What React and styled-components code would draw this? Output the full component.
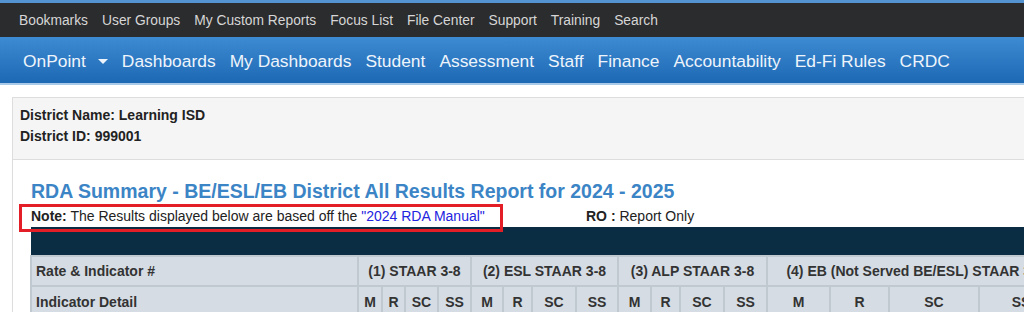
import React from "react";
import styled, { createGlobalStyle } from "styled-components";

const GlobalStyle = createGlobalStyle`
  html, body { margin: 0; padding: 0; background: #fff; overflow: hidden; }
  body { font-family: "Liberation Sans", Arial, sans-serif; color: #333; }
  * { box-sizing: border-box; }
`;

const Page = styled.div`
  width: 1280px;
`;

const UtilityBar = styled.div`
  display: flex;
  align-items: center;
  height: 37px;
  padding: 0 0 0 12px;
  background: #2b2c2e;
  border-top: 3px solid #5594d2;
`;

const UtilityLink = styled.a`
  padding: 0 7px;
  font-size: 13.8px;
  color: #d6d6d6;
  text-decoration: none;
  white-space: nowrap;
`;

const NavBar = styled.div`
  display: flex;
  align-items: center;
  height: 48px;
  padding: 3px 0 0 16px;
  background: linear-gradient(#3d8bd3, #1d68b3);
  border-bottom: 2px solid #a9c9e8;
`;

const NavItem = styled.a`
  display: flex;
  align-items: center;
  padding: 0 7px;
  font-size: 17.4px;
  color: #eef4fb;
  text-decoration: none;
  white-space: nowrap;
`;

const Caret = styled.span`
  display: inline-block;
  margin-left: 12px;
  width: 0;
  height: 0;
  border-left: 5px solid transparent;
  border-right: 5px solid transparent;
  border-top: 5px solid #eef4fb;
`;

const Panel = styled.div`
  margin: 12px 0 0 12px;
  border: 1px solid #dddddd;
  border-right: none;
  border-bottom: none;
`;

const PanelHeader = styled.div`
  background: #f5f5f5;
  border-bottom: 1px solid #dddddd;
  padding: 7px 7px 12px;
`;

const InfoLine = styled.div`
  font-size: 14px;
  font-weight: bold;
  line-height: 21px;
  color: #222;
`;

const PanelBody = styled.div`
  padding: 20px 0 0 17px;
`;

const Title = styled.h2`
  margin: 0 0 0 1px;
  font-size: 19.5px;
  line-height: 22px;
  font-weight: bold;
  color: #3b84c5;
`;

const NoteRow = styled.div`
  display: grid;
  grid-template-columns: 556px auto;
  margin-top: 5px;
  font-size: 14px;
  line-height: 18px;
  color: #222;
`;

const NoteCell = styled.div`
  position: relative;
  padding-left: 1px;
`;

const Highlight = styled.div`
  position: absolute;
  left: -11px;
  top: -3px;
  width: 484px;
  height: 28px;
  border: 3px solid #e31e26;
  z-index: 2;
  pointer-events: none;
`;

const ManualLink = styled.a`
  color: #2323e0;
  text-decoration: none;
`;

const Table = styled.table`
  margin-top: 2px;
  border-collapse: collapse;
  table-layout: fixed;
  width: ${(p) => p.$w}px;
`;

const DarkRow = styled.tr`
  height: 29px;
  background: #0b2d44;
`;

const Row = styled.tr`
  height: ${(p) => p.$h}px;
  background: #d5dce4;
`;

const Cell = styled.td`
  border: 2px solid #c0c8d0;
  padding: 0 ${(p) => (p.$left ? "4px" : "0")};
  text-align: ${(p) => (p.$left ? "left" : "center")};
  font-size: 14px;
  font-weight: bold;
  color: #333;
  white-space: nowrap;
  overflow: hidden;
`;

const DarkCell = styled.td`
  border: none;
  padding: 0;
`;

const colWidths = [327, 24, 23, 33, 33, 32, 29, 44, 42, 33, 29, 44, 43, 63, 59, 90, 84];
const tableWidth = colWidths.reduce((a, b) => a + b, 0);

const utility = ["Bookmarks", "User Groups", "My Custom Reports", "Focus List", "File Center", "Support", "Training", "Search"];
const nav = ["Dashboards", "My Dashboards", "Student", "Assessment", "Staff", "Finance", "Accountability", "Ed-Fi Rules", "CRDC"];

const groups = [
  { label: "(1) STAAR 3-8", span: 4 },
  { label: "(2) ESL STAAR 3-8", span: 4 },
  { label: "(3) ALP STAAR 3-8", span: 4 },
  { label: "(4) EB (Not Served BE/ESL) STAAR 3-8", span: 4 },
];

const subs = ["M", "R", "SC", "SS", "M", "R", "SC", "SS", "M", "R", "SC", "SS", "M", "R", "SC", "SS"];

export default function App() {
  return (
    <Page>
      <GlobalStyle />
      <UtilityBar>
        {utility.map((u) => (
          <UtilityLink key={u}>{u}</UtilityLink>
        ))}
      </UtilityBar>
      <NavBar>
        <NavItem>
          OnPoint
          <Caret />
        </NavItem>
        {nav.map((n) => (
          <NavItem key={n}>{n}</NavItem>
        ))}
      </NavBar>
      <Panel>
        <PanelHeader>
          <InfoLine>District Name: Learning ISD</InfoLine>
          <InfoLine>District ID: 999001</InfoLine>
        </PanelHeader>
        <PanelBody>
          <Title>RDA Summary - BE/ESL/EB District All Results Report for 2024 - 2025</Title>
          <NoteRow>
            <NoteCell>
              <Highlight />
              <b>Note:</b> The Results displayed below are based off the{" "}
              <ManualLink>"2024 RDA Manual"</ManualLink>
            </NoteCell>
            <div>
              <b>RO :</b> Report Only
            </div>
          </NoteRow>
          <Table $w={tableWidth}>
            <colgroup>
              {colWidths.map((w, i) => (
                <col key={i} style={{ width: w }} />
              ))}
            </colgroup>
            <tbody>
              <DarkRow>
                <DarkCell colSpan={colWidths.length} />
              </DarkRow>
              <Row $h={30}>
                <Cell $left>Rate &amp; Indicator #</Cell>
                {groups.map((g) => (
                  <Cell key={g.label} colSpan={g.span}>
                    {g.label}
                  </Cell>
                ))}
              </Row>
              <Row $h={32}>
                <Cell $left>Indicator Detail</Cell>
                {subs.map((s, i) => (
                  <Cell key={i}>{s}</Cell>
                ))}
              </Row>
            </tbody>
          </Table>
        </PanelBody>
      </Panel>
    </Page>
  );
}
